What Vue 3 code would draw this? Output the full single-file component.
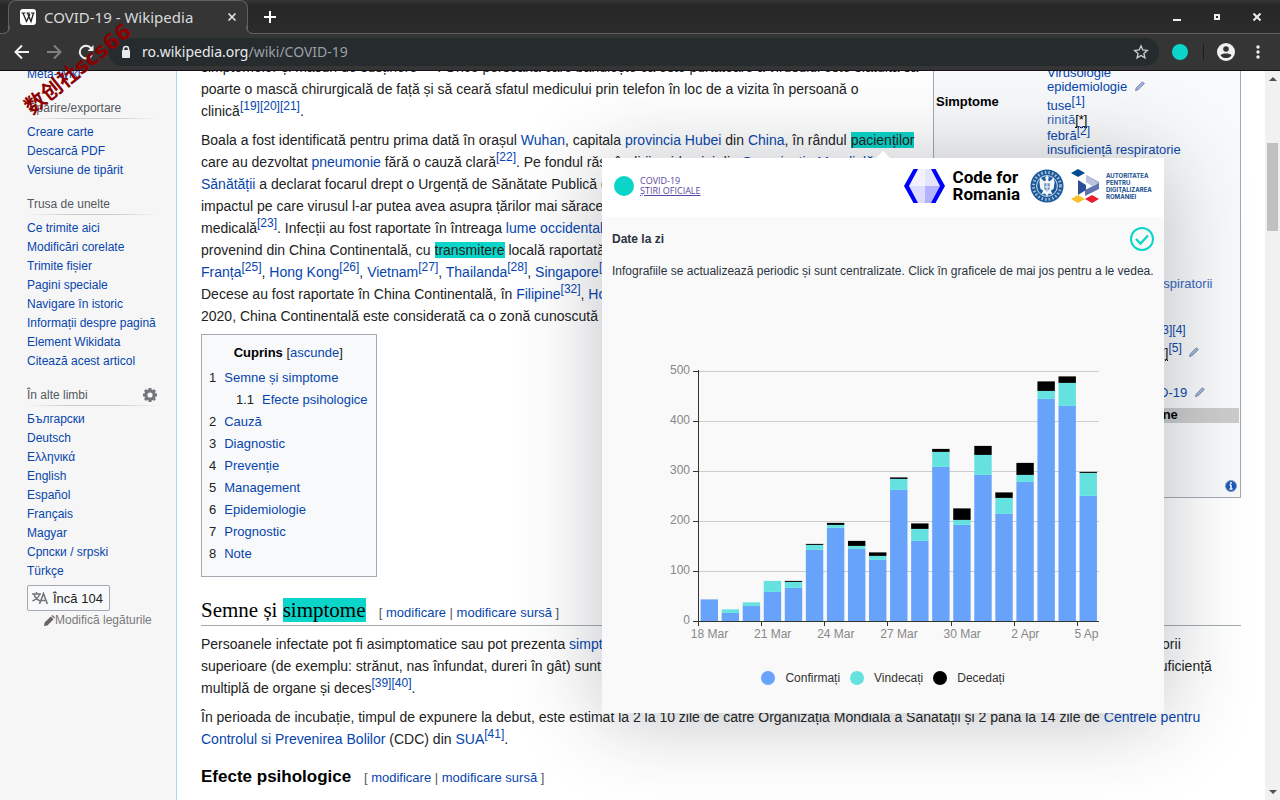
<script setup>
const tools = [
  { title: 'Tipărire/exportare', links: ['Creare carte', 'Descarcă PDF', 'Versiune de tipărit'] },
  {
    title: 'Trusa de unelte',
    links: ['Ce trimite aici', 'Modificări corelate', 'Trimite fișier', 'Pagini speciale', 'Navigare în istoric', 'Informații despre pagină', 'Element Wikidata', 'Citează acest articol'],
  },
  {
    title: 'În alte limbi',
    gear: true,
    links: ['Български', 'Deutsch', 'Ελληνικά', 'English', 'Español', 'Français', 'Magyar', 'Српски / srpski', 'Türkçe'],
  },
]
const toc = [
  ['1', 'Semne și simptome'],
  ['1.1', 'Efecte psihologice'],
  ['2', 'Cauză'],
  ['3', 'Diagnostic'],
  ['4', 'Prevenție'],
  ['5', 'Management'],
  ['6', 'Epidemiologie'],
  ['7', 'Prognostic'],
  ['8', 'Note'],
]
// cumulative tops per day: confirmed, + recovered, + deceased
const days = [
  [44, 44, 44], [17, 24, 24], [31, 38, 38], [59, 81, 81], [67, 79, 81], [143, 153, 155], [187, 193, 197],
  [145, 151, 161], [123, 131, 138], [263, 285, 288], [161, 185, 196], [309, 339, 345], [193, 203, 226],
  [293, 333, 351], [215, 247, 258], [279, 293, 317], [445, 461, 480], [431, 477, 490], [251, 297, 299],
]
const colors = ['#67a3fb', '#65e1e0', '#000000']
const step = 400 / days.length
const bars = days.flatMap((d, i) =>
  d.map((top, s) => {
    const base = s ? d[s - 1] : 0
    return { x: 37 + i * step + 1.6, y: 260.4 - top / 2, h: (top - base) / 2, c: colors[s] }
  }).filter((b) => b.h > 0)
)
const yTicks = [0, 100, 200, 300, 400, 500]
const xTicks = ['18 Mar', '21 Mar', '24 Mar', '27 Mar', '30 Mar', '2 Apr', '5 Apr']
const legend = [
  ['Confirmați', colors[0]],
  ['Vindecați', colors[1]],
  ['Decedați', colors[2]],
]
</script>

<template>
  <div class="browser">
    <header class="chrome">
      <div class="tabs">
        <div class="tab">
          <svg class="favicon" viewBox="0 0 16 16" width="16" height="16">
            <rect width="16" height="16" rx="3" fill="#fff" />
            <path d="M1.500 4h4M6.500 4h3.500M11 4h3.500" stroke="#222" stroke-width="1" />
            <path d="M3 4l3.500 8.500L10 5M7.500 4l3.500 8.500L13.500 4" fill="none" stroke="#222" stroke-width="1.300" />
          </svg>
          <span class="tab-title">COVID-19 - Wikipedia</span>
          <button class="plain" aria-label="Închide fila">
            <svg viewBox="0 0 10 10" width="10" height="10"><path d="M1.500 1.500l7 7M8.500 1.500l-7 7" stroke="#e8e8e8" stroke-width="1.600" /></svg>
          </button>
        </div>
        <button class="plain new-tab" aria-label="Filă nouă">
          <svg viewBox="0 0 12 12" width="12" height="12"><path d="M6 0v12M0 6h12" stroke="#fff" stroke-width="2" /></svg>
        </button>
        <div class="window-buttons">
          <button class="plain" aria-label="Minimizează"><svg viewBox="0 0 8 8" width="8" height="8"><path d="M0 7h8" stroke="#eee" stroke-width="2" /></svg></button>
          <button class="plain" aria-label="Restaurează"><svg viewBox="0 0 8 8" width="8" height="8"><path d="M2 2h4v4H2z" fill="none" stroke="#eee" stroke-width="2" /></svg></button>
          <button class="plain" aria-label="Închide"><svg viewBox="0 0 8 8" width="8" height="8"><path d="M.500.500l7 7M7.500.500l-7 7" stroke="#eee" stroke-width="2" /></svg></button>
        </div>
      </div>
      <div class="toolbar">
        <button class="plain" aria-label="Înapoi"><svg viewBox="0 0 16 16" width="16" height="16"><path d="M15 8H2M8 1.500L1.500 8 8 14.500" fill="none" stroke="#f1f1f1" stroke-width="2" /></svg></button>
        <button class="plain" aria-label="Înainte"><svg viewBox="0 0 16 16" width="16" height="16"><path d="M1 8h13M8 1.500L14.500 8 8 14.500" fill="none" stroke="#808080" stroke-width="2" /></svg></button>
        <button class="plain" aria-label="Reîncarcă"><svg viewBox="0 0 16 16" width="16" height="16"><path d="M13.300 4.500A6.300 6.300 0 1 0 14.200 9.800" fill="none" stroke="#f1f1f1" stroke-width="2" /><path d="M15.500 1v6h-6z" fill="#f1f1f1" /></svg></button>
        <div class="address">
          <svg viewBox="0 0 10 14" width="10" height="14"><path d="M2.500 6V4a2.500 2.500 0 0 1 5 0v2" fill="none" stroke="#e8eaed" stroke-width="1.500" /><rect x="1" y="5" width="8" height="8" rx="1" fill="#e8eaed" /></svg>
          <span class="url">ro.wikipedia.org<i>/wiki/COVID-19</i></span>
          <svg viewBox="0 0 16 16" width="16" height="16"><path d="M8 1.800l1.800 4.200 4.500.4-3.400 3 1 4.500L8 11.500l-3.900 2.400 1-4.500-3.400-3 4.500-.4z" fill="none" stroke="#cfd1d3" stroke-width="1.300" /></svg>
        </div>
        <span class="extension"></span>
        <span class="divider"></span>
        <button class="plain" aria-label="Profil"><svg viewBox="0 0 18 18" width="18" height="18"><circle cx="9" cy="9" r="9" fill="#f1f1f1" /><circle cx="9" cy="6" r="2.800" fill="#353535" /><path d="M3.500 12.500c1-2.600 10-2.600 11 0-2.400 3.400-8.600 3.400-11 0z" fill="#353535" /></svg></button>
        <button class="plain kebab" aria-label="Meniu"><svg viewBox="0 0 4 14" width="4" height="14"><circle cx="2" cy="2" r="1.700" fill="#f1f1f1" /><circle cx="2" cy="7" r="1.700" fill="#f1f1f1" /><circle cx="2" cy="12" r="1.700" fill="#f1f1f1" /></svg></button>
      </div>
    </header>

    <div class="viewport">
      <nav class="sidebar">
        <a class="cut" href="#">Meta-Wiki</a>
        <section v-for="g in tools" :key="g.title">
          <h3>
            {{ g.title }}
            <svg v-if="g.gear" viewBox="0 0 16 16" width="16" height="16">
              <circle cx="8" cy="8" r="4.200" fill="none" stroke="#72777d" stroke-width="3.200" />
              <path d="M8 1v2.500M8 12.500V15M1 8h2.500M12.500 8H15M3 3l1.800 1.800M11.200 11.200L13 13M3 13l1.800-1.800M11.200 4.800L13 3" stroke="#72777d" stroke-width="3" />
            </svg>
          </h3>
          <ul>
            <li v-for="l in g.links" :key="l"><a href="#">{{ l }}</a></li>
          </ul>
        </section>
        <button class="more">
          <svg viewBox="0 0 16 12" width="16" height="12"><path d="M0 2h9M4.500 0v2M2 2c1 4 4 6 6 7M7.500 2C7 6 3 8 .500 9" fill="none" stroke="#72777d" stroke-width="1.500" /><path d="M7.500 12L11.500 1.500 15.300 12M9 8.500h5" fill="none" stroke="#72777d" stroke-width="1.600" /></svg>
          Încă 104
        </button>
        <a class="edit-links" href="#">
          <svg viewBox="0 0 12 12" width="12" height="12"><path d="M1 11l.600-3.400L7.800 1.400l2.800 2.800-6.200 6.200zM8.400.800l1-.8L12 2.600l-.8 1z" fill="#666" /></svg>Modifică legăturile
        </a>
      </nav>

      <main class="article">
        <table class="infobox">
          <tbody>
            <tr>
              <th></th>
              <td>
                <ul>
                  <li><a href="#">Boli infecțioase</a></li>
                  <li><a href="#">Virusologie</a></li>
                  <li><a href="#">epidemiologie</a> <svg class="pen" viewBox="0 0 10 10" width="10" height="10"><path d="M.500 9.500l.800-2.500L7.500.800 9.300 2.600 3 8.700z" fill="#aab8d8" stroke="#7486b5" /></svg></li>
                </ul>
              </td>
            </tr>
            <tr>
              <th>Simptome</th>
              <td class="symptoms">
                <ul>
                  <li class="ref"><a href="#">tuse<sup>[1]</sup></a></li>
                  <li><a class="light" href="#">rinită</a><span class="note">[*]</span></li>
                  <li class="ref"><a href="#">febră<sup>[2]</sup></a></li>
                  <li><a href="#">insuficiență respiratorie</a></li>
                  <li><a href="#">dispnee</a></li>
                  <li><a href="#">oboseală</a></li>
                  <li><a href="#">mialgie</a></li>
                  <li><a href="#">cefalee</a></li>
                  <li><a href="#">diaree</a></li>
                  <li><a href="#">frison</a></li>
                  <li><a href="#">anosmie</a></li>
                  <li><a href="#">ageuzie</a></li>
                </ul>
              </td>
            </tr>
            <tr>
              <th>Transmitere</th>
              <td><ul><li><a class="light" href="#">aerosoli prin căile respiratorii</a></li></ul></td>
            </tr>
            <tr>
              <th>Tratament</th>
              <td class="treatment">
                <ul>
                  <li><a href="#">terapie de susținere</a></li>
                  <li><a href="#">oxigenoterapie</a></li>
                  <li class="ref"><a href="#">igienizarea mâinilor<sup>[3][4]</sup></a></li>
                  <li class="ref tall"><a href="#">autoizolare deplină</a><span class="note">[*]</span><a href="#"><sup>[5]</sup></a> <svg class="pen" viewBox="0 0 10 10" width="10" height="10"><path d="M.500 9.500l.800-2.500L7.500.800 9.300 2.600 3 8.700z" fill="#aab8d8" stroke="#7486b5" /></svg></li>
                </ul>
              </td>
            </tr>
            <tr>
              <th>Pandemie</th>
              <td class="pandemic"><a href="#">Pandemia de COVID-19</a> <svg class="pen" viewBox="0 0 10 10" width="10" height="10"><path d="M.500 9.500l.800-2.500L7.500.800 9.300 2.600 3 8.700z" fill="#aab8d8" stroke="#7486b5" /></svg></td>
            </tr>
            <tr><th class="band" colspan="2">Clasificare și resurse externe</th></tr>
            <tr>
              <td class="info" colspan="2">
                <svg viewBox="0 0 12 12" width="12" height="12"><circle cx="6" cy="6" r="5.500" fill="#1d57b8" stroke="#7f9cc8" /><path d="M6 5v4M4.500 5H6M4.500 9h3" stroke="#fff" stroke-width="1.500" /><circle cx="6" cy="3" r="1" fill="#fff" /></svg>
              </td>
            </tr>
          </tbody>
        </table>

        <p>
          simptomelor și măsuri de susținere<sup><a href="#">[18]</a></sup>. Orice persoană care bănuiește că este purtătoare a virusului este sfătuită să<br />
          poarte o mască chirurgicală de față și să ceară sfatul medicului prin telefon în loc de a vizita în persoană o<br />
          clinică<sup><a href="#">[19][20][21]</a></sup>.
        </p>
        <p>
          Boala a fost identificată pentru prima dată în orașul <a href="#">Wuhan</a>, capitala <a href="#">provincia Hubei</a> din <a href="#">China</a>, în rândul <mark>pacienților</mark><br />
          care au dezvoltat <a href="#">pneumonie</a> fără o cauză clară<sup><a href="#">[22]</a></sup>. Pe fondul răspândirii epidemiei din <a href="#">Organizația Mondială</a><br />
          <a href="#">Sănătății</a> a declarat focarul drept o Urgență de Sănătate Publică de interes internațional, pe baza<br />
          impactul pe care virusul l-ar putea avea asupra țărilor mai sărace cu mai puțină infrastructură<br />
          medicală<sup><a href="#">[23]</a></sup>. Infecții au fost raportate în întreaga <a href="#">lume occidentală</a> și în Asia, majoritatea<br />
          provenind din China Continentală, cu <mark>transmitere</mark> locală raportată în Germania, Japonia<br />
          <a href="#">Franța<sup>[25]</sup></a>, <a href="#">Hong Kong<sup>[26]</sup></a>, <a href="#">Vietnam<sup>[27]</sup></a>, <a href="#">Thailanda<sup>[28]</sup></a>, <a href="#">Singapore<sup>[29]</sup></a>, <a href="#">Italia<sup>[30]</sup></a><br />
          Decese au fost raportate în China Continentală, în <a href="#">Filipine<sup>[32]</sup></a>, <a href="#">Hong Kong</a> și Japonia. Din februarie<br />
          2020, China Continentală este considerată ca o zonă cunoscută cu transmitere comunitară.
        </p>

        <div class="toc">
          <div class="toc-head"><b>Cuprins</b> [<a href="#">ascunde</a>]</div>
          <ul>
            <li v-for="t in toc" :key="t[0]" :class="{ sub: t[0].length > 1 }"><span>{{ t[0] }}</span><a href="#">{{ t[1] }}</a></li>
          </ul>
        </div>

        <h2>Semne și <mark>simptome</mark> <small>[ <a href="#">modificare</a> | <a href="#">modificare sursă</a> ]</small></h2>
        <p>
          Persoanele infectate pot fi asimptomatice sau pot prezenta <a href="#">simptome</a> precum febră, tuse, oboseală sau dispnee. Simptomele unor infecții ale căilor respiratorii<br />
          superioare (de exemplu: strănut, nas înfundat, dureri în gât) sunt mai puțin frecvente. Cazurile severe pot duce și la pneumonii, sindrom respirator acut, insuficiență<br />
          multiplă de organe și deces<sup><a href="#">[39][40]</a></sup>.
        </p>
        <p>
          În perioada de incubație, timpul de expunere la debut, este estimat la 2 la 10 zile de către Organizația Mondială a Sănătății și 2 până la 14 zile de <a href="#">Centrele pentru</a><br />
          <a href="#">Controlul si Prevenirea Bolilor</a> (CDC) din <a href="#">SUA<sup>[41]</sup></a>.
        </p>
        <h3>Efecte psihologice <small>[ <a href="#">modificare</a> | <a href="#">modificare sursă</a> ]</small></h3>
      </main>

      <div class="scrollbar">
        <svg viewBox="0 0 8 4" width="8" height="4"><path d="M4 0l4 4H0z" fill="#505050" /></svg>
        <span class="thumb"></span>
        <svg viewBox="0 0 8 4" width="8" height="4"><path d="M4 4l4-4H0z" fill="#505050" /></svg>
      </div>
    </div>

    <aside class="popup">
      <div class="brands">
        <span class="dot"></span>
        <a class="official" href="#">COVID-19<br /><u>ȘTIRI OFICIALE</u></a>
        <svg class="hex" viewBox="0 0 41 36" width="41" height="36">
          <path d="M12 1h17l8 17-8 17H12L4 18z" fill="#dcdcff" />
          <path d="M12 1h9v17H4z" fill="#f1f1ff" /><path d="M21 1h8l8 17H21z" fill="#e4e4ff" /><path d="M21 18h16l-8 17h-8z" fill="#b3b3ff" />
          <path d="M9.500 1H14L5 18l9 17H9.500L0 18zM31.500 1H27l9 17-9 17h4.500L41 18z" fill="#0000fd" />
        </svg>
        <b class="code">Code for<br />Romania</b>
        <svg class="seal" viewBox="0 0 36 36" width="34" height="34">
          <circle cx="18" cy="18" r="17.500" fill="#1d5a9b" />
          <circle cx="18" cy="18" r="14.300" fill="none" stroke="#a9c2dc" stroke-width="3" stroke-dasharray="1.600 2.200" />
          <circle cx="18" cy="18" r="11" fill="#1d5a9b" stroke="#dbe6f0" stroke-width="1" />
          <path d="M18 7l2 2-1 3 2 1 4-4 1 5-1 7-3 2 2 4-4-1-2 3-2-3-4 1 2-4-3-2-1-7 1-5 4 4 2-1-1-3z" fill="#f4f8fb" />
          <path d="M15 15h6v6l-3 3-3-3z" fill="#6f96bf" /><path d="M18 15v9M15 19h6" stroke="#fff" />
        </svg>
        <svg class="adr" viewBox="0 0 30 34" width="30" height="34">
          <path d="M0 4l7-4 7 4-7 4z" fill="#034a91" /><path d="M7 11v15l8-5v-5z" fill="#2a4f96" />
          <path d="M15 6l13 7v3l-13-4z" fill="#8193c2" /><path d="M15 6v7l6 4 7-3z" fill="#b9c3df" /><path d="M28 14v6L14 27v-6z" fill="#5d74b1" />
          <path d="M0 30l7-4 7 4-7 4z" fill="#fbc02d" /><path d="M14 30l7-4 7 4-7 4z" fill="#ea1c2c" />
        </svg>
        <b class="authority">AUTORITATEA<br />PENTRU<br />DIGITALIZAREA<br />ROMÂNIEI</b>
      </div>
      <div class="details">
        <div class="title">
          <h4>Date la zi</h4>
          <svg viewBox="0 0 24 24" width="24" height="24"><circle cx="12" cy="12" r="11" fill="none" stroke="#0ad5c8" stroke-width="2" /><path d="M6 12l4.500 4.500 7.500-8" fill="none" stroke="#0ad5c8" stroke-width="2.400" /></svg>
        </div>
        <p>Infografiile se actualizează periodic și sunt centralizate. Click în graficele de mai jos pentru a le vedea.</p>
        <svg class="chart" viewBox="0 0 437 290" width="437" height="290">
          <g v-for="t in yTicks" :key="t">
            <path :d="`M37 ${260.5 - t / 2}H437`" stroke="#cccccc" />
            <path :d="`M31 ${260.5 - t / 2}h6`" stroke="#333" />
            <text x="28" :y="263 - t / 2" text-anchor="end">{{ t }}</text>
          </g>
          <rect v-for="(b, i) in bars" :key="i" :x="b.x" :y="b.y" width="17.400" :height="b.h" :fill="b.c" />
          <path d="M36.500 9v252M36 260.500h401" stroke="#333" />
          <g v-for="(t, i) in xTicks" :key="t">
            <path :d="`M${Math.round(i * 3 * step) + 36.5} 260v5`" stroke="#333" />
            <text :x="37 + (i * 3 + 0.5) * step" y="277" text-anchor="middle">{{ t }}</text>
          </g>
        </svg>
        <div class="legend">
          <span v-for="l in legend" :key="l[0]"><i :style="{ background: l[1] }"></i>{{ l[0] }}</span>
        </div>
      </div>
    </aside>

    <div class="stamp">数创社scs66</div>
  </div>
</template>

<style>
body { margin: 0; overflow: hidden; }
</style>

<style scoped>
* { box-sizing: border-box; }
.browser { position: relative; display: flex; flex-direction: column; height: 100vh; overflow: hidden; background: #fff; color: #222; font: 14px/22px "Liberation Sans", "DejaVu Sans", sans-serif; }
a { color: #0645ad; text-decoration: none; }
ul { list-style: none; margin: 0; padding: 0; }
.plain { display: inline-flex; align-items: center; justify-content: center; border: 0; background: none; padding: 0; }

.chrome { flex: none; background: #353535; border-bottom: 1px solid #151015; font-family: "Noto Sans", sans-serif; }
.tabs { display: flex; align-items: center; height: 34px; padding-left: 8px; border-bottom: 1px solid #606060; background: linear-gradient(#363636, #272727 6px, #2c2c2c); }
.tab { position: relative; display: flex; align-items: center; gap: 8px; width: 240px; height: 34px; padding: 0 10px 0 11px; border: 1px solid #606060; border-bottom: 0; border-radius: 8px 8px 0 0; background: #353535; color: #dadada; }
.tab::before, .tab::after { content: ""; position: absolute; bottom: 0; width: 7px; height: 7px; border-bottom: 1px solid #606060; }
.tab::before { left: -7px; border-right: 1px solid #606060; border-bottom-right-radius: 7px; box-shadow: 2px 2px 0 #353535; }
.tab::after { right: -7px; border-left: 1px solid #606060; border-bottom-left-radius: 7px; box-shadow: -2px 2px 0 #353535; }
.tab-title { flex: 1; font-size: 15px; white-space: nowrap; }
.new-tab { margin-left: 16px; }
.window-buttons { display: flex; gap: 32px; margin-left: auto; padding-right: 19px; }
.toolbar { display: flex; align-items: center; gap: 16px; height: 36px; padding: 0 18px 0 14px; }
.address { flex: 1; display: flex; align-items: center; gap: 11px; height: 28px; margin: 0 -3px 0 -2px; padding: 0 10px 0 13px; border-radius: 14px; background: #262b2e; }
.url { flex: 1; color: #e8eaed; font-size: 14px; }
.url i { font-style: normal; color: #9aa0a6; }
.extension { width: 16px; height: 16px; border-radius: 8px; background: #0ad5c8; }
.divider { width: 1px; height: 16px; margin: 0 -3px 0 -1px; background: #1c1c1c; }
.kebab { width: 8px; margin-left: 3px; }

.viewport { flex: 1; display: flex; min-height: 0; overflow: hidden; }
.sidebar { flex: none; width: 177px; padding: 0 18px 0 27px; border-right: 1px solid #a7d7f9; background: #f6f6f6; font-size: 12px; line-height: 19px; }
.cut { display: block; margin-top: -6px; }
.sidebar h3 { position: relative; display: flex; justify-content: space-between; align-items: center; margin: 14px 0 4px; height: 21px; color: #54595d; font-size: 12px; font-weight: 400; border-bottom: 1px solid; border-image: linear-gradient(to right, rgba(200, 204, 209, 0), #c8ccd1 33%, #c8ccd1 66%, rgba(200, 204, 209, 0)) 1; }
.sidebar li { white-space: nowrap; }
.more { display: flex; align-items: center; gap: 5px; height: 26px; margin-top: 4px; padding: 0 6px 0 4px; border: 1px solid #a2a9b1; border-radius: 2px; background: #f8f9fa; color: #222; font: 13px "Liberation Sans", sans-serif; }
.edit-links { display: flex; align-items: center; margin-left: 16px; color: #797979; white-space: nowrap; }

.article { flex: 1; min-width: 0; margin-top: -15px; padding: 0 24px; white-space: nowrap; }
p { margin: 0 0 7px; }
sup { font-size: 12px; line-height: 0; vertical-align: super; }
mark { background: #0ad5c8; color: inherit; }
.infobox { float: right; width: 308px; margin-top: -7px; border: 1px solid #a2a9b1; border-top: 0; border-spacing: 0; padding: 0 1px 2px 2px; background: #f8f9fa; color: #000; font-size: 13px; line-height: 14px; }
.infobox th { width: 111px; padding: 1px 0; text-align: left; vertical-align: top; }
.infobox td { padding: 3px 0 0; vertical-align: top; }
.infobox .ref { padding-top: 2px; }
.infobox .tall { padding-top: 4px; }
.infobox .symptoms { padding-bottom: 5px; }
.infobox .treatment { padding-top: 7px; }
.infobox .pandemic { padding: 26px 0 8px; }
.infobox .band { height: 15px; padding: 0; background: #ccc; text-align: center; }
.infobox .info { height: 72px; padding-right: 2px; text-align: right; vertical-align: bottom; }
.infobox a.light { color: #3366bb; }
.note { border-bottom: 1px dotted; }
.pen { margin-left: 4px; }
.toc { display: table; padding: 7px 8px 11px 7px; border: 1px solid #a2a9b1; background: #f8f9fa; font-size: 13px; }
.toc-head { text-align: center; }
.toc-head b { color: #000; font-size: 13px; }
.toc ul { padding-top: 3px; }
.toc li { display: flex; gap: 8px; }
.toc .sub { padding-left: 27px; }
h2, h3 { color: #000; }
h2 { margin: 20px 0 7px; padding-bottom: 1px; border-bottom: 1px solid #a2a9b1; font: 21px/27px "Liberation Serif", serif; }
h3 { margin: 16px 0 0; font-size: 17px; }
small { margin-left: 8px; color: #54595d; font: 13px "Liberation Sans", sans-serif; }

.scrollbar { flex: none; display: flex; flex-direction: column; align-items: center; width: 15px; padding: 6px 0; background: #f1f1f1; }
.thumb { width: 11px; height: 88px; margin: 62px 0 auto; background: #c1c1c1; }

.popup { position: absolute; left: 602px; top: 158px; width: 562px; background: #f9f9f9; color: #2c3440; font-size: 12px; box-shadow: 0 4px 80px rgba(40, 48, 56, 0.3); }
.popup::before { content: ""; position: absolute; left: 274px; top: -7px; border: 7px solid transparent; border-top: 0; border-bottom-color: #fff; }
.brands { display: flex; align-items: center; height: 59px; padding: 0 10px 4px 12px; background: #fff; }
.dot { width: 20px; height: 20px; border-radius: 10px; background: #0ad5c8; }
.official { margin: 0 auto 0 6px; color: #5746a0; font: 400 9px/10px "Open Sans", sans-serif; }
.code { margin: 0 10px 0 8px; color: #000; font: 700 17px/17px Roboto, sans-serif; }
.adr { margin: 0 5px 0 7px; }
.authority { width: 48px; color: #144b8c; font: 700 6px/7px Inter, sans-serif; }
.details { padding: 10px; }
.title { display: flex; justify-content: space-between; align-items: center; }
.title h4 { margin: 0; font-size: 12px; }
.popup p { margin: 9px 0 79px; }
.chart { display: block; margin-left: 50px; font-size: 12px; }
.chart text { fill: #888; }
.legend { display: flex; justify-content: center; gap: 10px; margin: 16px 0 14px; color: #333; }
.legend span { display: flex; align-items: center; gap: 10px; }
.legend i { width: 14px; height: 14px; border-radius: 7px; }

.stamp { position: absolute; left: 3px; top: 55px; width: 150px; text-align: center; color: #8b0000; font: 700 21px/28px "DejaVu Sans", "Noto Sans CJK SC", sans-serif; transform: rotate(-39deg); pointer-events: none; }
</style>
